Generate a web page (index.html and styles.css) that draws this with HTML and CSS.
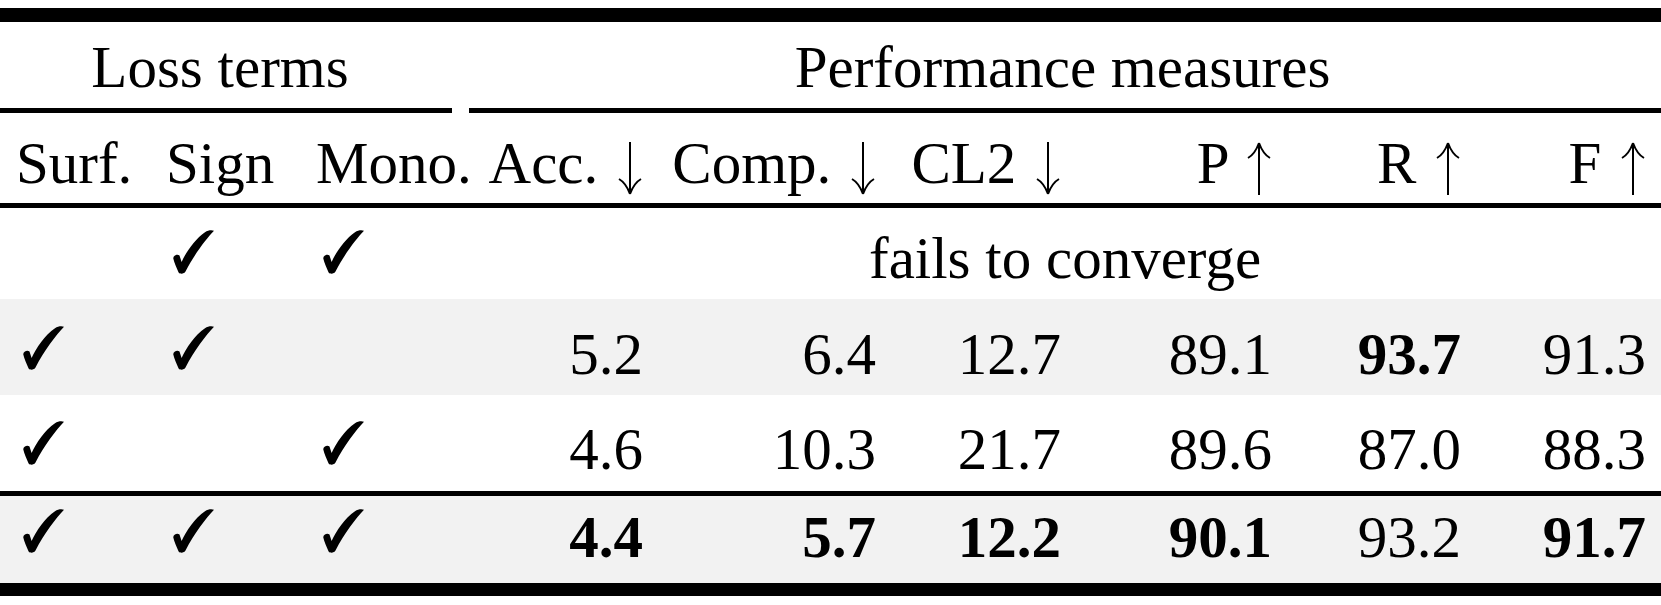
FILE: index.html
```html
<!DOCTYPE html>
<html lang="en">

<head>
    <meta charset="UTF-8">
    <meta name="viewport" content="width=device-width, initial-scale=1.0">
    <title>Ablation: loss terms</title>

    <link rel="stylesheet" href="styles.css">

</head>

<body>

    <!-- shared glyphs -->
    <svg class="defs" aria-hidden="true">
        <symbol id="check" viewBox="0 0 41 44">
            <path d="M0.3 28.5C0 25.5 4.5 23.5 6.5 25.5L8.6 32C13 22 22 9 32 2.2C35 0.3 38.5 -0.2 41 0.8C33 9 21 25 12.5 41.5C11.5 43.8 7 44.5 5.6 42.5C3.5 37.5 1.2 32.5 0.3 28.5Z" />
        </symbol>
        <symbol id="down" viewBox="0 0 24 53">
            <path d="M12 0V51M1 37Q8 41 12 52M23 37Q16 41 12 52" fill="none" stroke="#000" stroke-width="2" />
        </symbol>
        <symbol id="up" viewBox="0 0 24 53">
            <path d="M12 53V2M1 16Q8 12 12 1M23 16Q16 12 12 1" fill="none" stroke="#000" stroke-width="2" />
        </symbol>
    </svg>

    <table class="ablation">
        <colgroup>
            <col class="w-surf">
            <col class="w-sign">
            <col class="w-mono">
            <col class="w-acc">
            <col class="w-comp">
            <col class="w-cl2">
            <col class="w-p">
            <col class="w-r">
            <col class="w-f">
        </colgroup>
        <thead>
            <tr class="group">
                <th colspan="3" class="loss">Loss terms</th>
                <th colspan="6" class="perf">Performance measures</th>
            </tr>
            <tr class="cmid">
                <td colspan="3"><div class="cmid-line trim-r"></div></td>
                <td colspan="6"><div class="cmid-line trim-l"></div></td>
            </tr>
            <tr class="names">
                <th class="l">Surf.</th>
                <th class="l">Sign</th>
                <th class="l">Mono.</th>
                <th class="r">Acc. <svg class="arrow"><use href="#down" /></svg></th>
                <th class="r">Comp. <svg class="arrow"><use href="#down" /></svg></th>
                <th class="r">CL2 <svg class="arrow"><use href="#down" /></svg></th>
                <th class="r">P <svg class="arrow"><use href="#up" /></svg></th>
                <th class="r">R <svg class="arrow"><use href="#up" /></svg></th>
                <th class="r last">F <svg class="arrow"><use href="#up" /></svg></th>
            </tr>
        </thead>
        <tbody>
            <tr class="fail">
                <td class="l"></td>
                <td class="l"><svg class="check"><use href="#check" /></svg></td>
                <td class="l"><svg class="check"><use href="#check" /></svg></td>
                <td colspan="6" class="note">fails to converge</td>
            </tr>
            <tr class="shade row-a">
                <td class="l"><svg class="check"><use href="#check" /></svg></td>
                <td class="l"><svg class="check"><use href="#check" /></svg></td>
                <td class="l"></td>
                <td class="r">5.2</td>
                <td class="r">6.4</td>
                <td class="r">12.7</td>
                <td class="r">89.1</td>
                <td class="r"><b>93.7</b></td>
                <td class="r last">91.3</td>
            </tr>
            <tr class="row-b">
                <td class="l"><svg class="check"><use href="#check" /></svg></td>
                <td class="l"></td>
                <td class="l"><svg class="check"><use href="#check" /></svg></td>
                <td class="r">4.6</td>
                <td class="r">10.3</td>
                <td class="r">21.7</td>
                <td class="r">89.6</td>
                <td class="r">87.0</td>
                <td class="r last">88.3</td>
            </tr>
            <tr class="shade full">
                <td class="l"><svg class="check"><use href="#check" /></svg></td>
                <td class="l"><svg class="check"><use href="#check" /></svg></td>
                <td class="l"><svg class="check"><use href="#check" /></svg></td>
                <td class="r"><b>4.4</b></td>
                <td class="r"><b>5.7</b></td>
                <td class="r"><b>12.2</b></td>
                <td class="r"><b>90.1</b></td>
                <td class="r">93.2</td>
                <td class="r last"><b>91.7</b></td>
            </tr>
        </tbody>
    </table>

</body>

</html>
```

FILE: styles.css
```css
body {
    margin: 0;
    background-color: #fff;
    color: #000;
    font-family: "Liberation Serif", "Times New Roman", serif;
    font-size: 59px;
}

.defs {
    position: absolute;
    width: 0;
    height: 0;
    overflow: hidden;
}

.ablation {
    width: 1661px;
    margin-top: 8px;
    table-layout: fixed;
    border-collapse: separate;
    border-spacing: 0;
    border-top: 14px solid #000;
    border-bottom: 13px solid #000;
}

.w-surf { width: 150px; }
.w-sign { width: 150px; }
.w-mono { width: 160px; }
.w-acc { width: 195px; }
.w-comp { width: 233px; }
.w-cl2 { width: 185px; }
.w-p { width: 211px; }
.w-r { width: 189px; }
.w-f { width: 188px; }

th,
td {
    padding: 0 0 12px 0;
    line-height: 58px;
    vertical-align: bottom;
    white-space: nowrap;
    font-weight: normal;
}

b {
    font-weight: bold;
}

.l {
    text-align: left;
    padding-left: 16px;
}

.r {
    text-align: right;
    padding-right: 12px;
}

.r.last {
    padding-right: 15px;
}

/* header rows */
.group {
    height: 86px;
}

.loss {
    text-align: center;
    padding-right: 20px;
}

.perf {
    text-align: center;
    padding-left: 4px;
}

.cmid {
    height: 5px;
}

.cmid td {
    padding: 0;
    line-height: 0;
}

.cmid-line {
    height: 5px;
    background-color: #000;
}

.trim-r {
    margin-right: 8px;
}

.trim-l {
    margin-left: 9px;
}

.names {
    height: 95px;
}

.names th {
    padding-bottom: 11px;
    border-bottom: 5px solid #000;
}

.arrow {
    width: 24px;
    height: 53px;
    margin-left: 5px;
    margin-right: 1px;
    margin-bottom: -12px;
}

.check {
    width: 41px;
    height: 44px;
    margin-left: 7px;
    margin-bottom: 4px;
}

/* body rows */
.fail {
    height: 91px;
}

.note {
    text-align: center;
    padding-left: 9px;
}

.shade td {
    background-color: #f2f2f2;
}

.row-a {
    height: 96px;
}

.row-b {
    height: 101px;
}

.row-b td {
    padding-bottom: 13px;
    border-bottom: 5px solid #000;
}

.full {
    height: 87px;
}

.full td {
    padding-bottom: 17px;
}
```
